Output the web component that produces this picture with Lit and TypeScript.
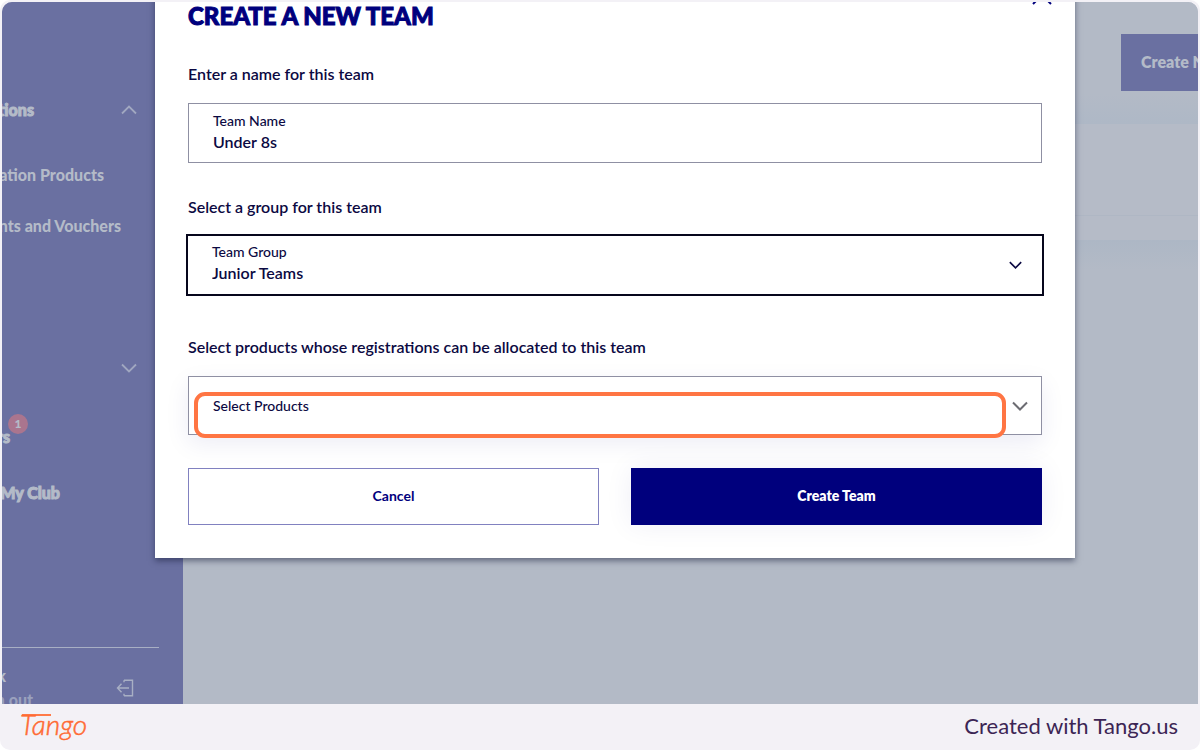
import { LitElement, html, css, svg } from "lit";
import { customElement, state } from "lit/decorators.js";

const chevron = (cls: string, up = false) => html`
  <svg class=${cls} viewBox="0 0 16 10" aria-hidden="true">
    ${up ? svg`<path d="M1 8.5 8 1.5l7 7" />` : svg`<path d="M1 1.5l7 7 7-7" />`}
  </svg>
`;

@customElement("side-nav")
class SideNav extends LitElement {
  static styles = css`
    :host {
      display: flex;
      flex-direction: column;
      flex: 0 0 181px;
      box-sizing: border-box;
      background: #6a70a1;
      color: #b4bbc8;
      overflow: hidden;
    }
    nav {
      display: flex;
      flex-direction: column;
      flex: 1;
      padding-top: 96px;
    }
    .item {
      display: flex;
      justify-content: flex-end;
      align-items: center;
      width: 141px;
      height: 24px;
      color: inherit;
      text-decoration: none;
      white-space: nowrap;
      font-weight: 900;
      font-size: 16px;
      line-height: 24px;
    }
    .group {
      gap: 87px;
      width: 135px;
    }
    .group,
    .members,
    .club {
      -webkit-text-stroke: 1px #b4bbc8;
    }
    .products {
      width: 102px;
      margin-top: 41px;
    }
    .vouchers {
      width: 119px;
      margin-top: 27px;
    }
    .closed {
      width: 135px;
      margin-top: 118px;
    }
    .members {
      width: 8px;
      margin-top: 45px;
      position: relative;
      overflow: visible;
    }
    .club {
      width: 58px;
      margin-top: 32px;
    }
    .badge {
      position: absolute;
      left: 6px;
      top: -11px;
      width: 20px;
      height: 20px;
      border-radius: 50%;
      background: #aa758e;
      font-size: 12px;
      line-height: 20px;
      text-align: center;
      -webkit-text-stroke: 0;
    }
    .chev {
      flex: none;
      width: 16px;
      height: 10px;
      fill: none;
      stroke: #a0a7c0;
      stroke-width: 1.8;
    }
    .account {
      display: flex;
      align-items: center;
      justify-content: space-between;
      box-sizing: border-box;
      width: 157px;
      height: 57px;
      overflow: hidden;
      border-top: 1px solid #a8afc4;
      padding-right: 25px;
      padding-top: 24px;
    }
    .who {
      display: flex;
      flex-direction: column;
      align-items: flex-end;
      width: 31px;
      font-size: 16px;
      line-height: 24px;
      font-weight: 900;
      white-space: nowrap;
    }
    .name {
      width: 4px;
      display: flex;
      justify-content: flex-end;
      align-self: flex-start;
    }
    .out {
      color: #9aa1bd;
      text-decoration: none;
    }
    .exit {
      width: 18px;
      height: 18px;
      fill: none;
      stroke: #a8afc4;
      stroke-width: 1.4;
    }
  `;

  render() {
    return html`
      <nav>
        <a class="item group" href="#registrations">Registrations ${chevron("chev", true)}</a>
        <a class="item products" href="#products">Registration Products</a>
        <a class="item vouchers" href="#vouchers">Discounts and Vouchers</a>
        <a class="item closed" href="#more" aria-label="More">${chevron("chev")}</a>
        <a class="item members" href="#members">Members<span class="badge">1</span></a>
        <a class="item club" href="#club">My Club</a>
      </nav>
      <div class="account">
        <div class="who">
          <span class="name">Mark</span>
          <a class="out" href="#signout">Sign out</a>
        </div>
        <svg class="exit" viewBox="0 0 18 18" aria-hidden="true">
          <path d="M8 1.2h8.5v15.6H8M8 1.2v2M8 16.8v-2M1.5 9H13M5.5 4.7 1.5 9l4 4.3" />
        </svg>
      </div>
    `;
  }
}

@customElement("team-dialog")
class TeamDialog extends LitElement {
  @state() private teamName = "Under 8s";

  static styles = css`
    :host {
      display: block;
      box-sizing: border-box;
      background: #fff;
      color: #0b0942;
      padding: 40px 33px 33px;
      box-shadow: 0 3px 6px rgba(20, 25, 55, 0.5);
    }
    .head {
      display: flex;
      justify-content: space-between;
      align-items: flex-start;
    }
    h1 {
      margin: 0;
      font-size: 24px;
      line-height: 32px;
      font-weight: 900;
      color: #00007d;
      text-transform: uppercase;
      -webkit-text-stroke: 1px #00007d;
    }
    .close {
      border: 0;
      background: none;
      padding: 0;
      width: 20px;
      height: 20px;
      margin: -15px -10px 0 0;
    }
    .close svg {
      display: block;
      fill: none;
      stroke: #00007d;
      stroke-width: 2;
    }
    .prompt {
      display: block;
      font-size: 16px;
      line-height: 20px;
      font-weight: 600;
      margin: 32px 0 19px;
    }
    .box {
      display: flex;
      flex-direction: column;
      justify-content: center;
      box-sizing: border-box;
      position: relative;
      height: 60px;
      border: 1px solid #8f90a3;
      padding: 0 24px 2px;
    }
    .box label {
      font-size: 14px;
      line-height: 20px;
      font-weight: 500;
    }
    input,
    select {
      appearance: none;
      display: block;
      width: 100%;
      box-sizing: border-box;
      border: 0;
      border-radius: 0;
      outline: 0;
      background: transparent;
      padding: 0;
      margin: 0;
      height: 22px;
      font: 600 16px/22px Lato, "Open Sans", sans-serif;
      color: inherit;
    }
    .focused {
      height: 62px;
      margin: -1px -2px 0;
      border: 2px solid #07071c;
      padding: 0 24px 4px;
    }
    .second {
      margin: 34px 0 18px;
    }
    .third {
      margin: 41px 0 19px;
    }
    .products {
      height: 59px;
      padding: 0 24px;
      box-shadow: 0 8px 24px rgba(0, 0, 125, 0.08);
    }
    .products select {
      font-size: 14px;
      font-weight: 500;
      height: 57px;
      line-height: 57px;
    }
    .arrow {
      position: absolute;
      right: 20px;
      top: 24px;
      width: 13px;
      height: 10px;
      fill: none;
      stroke: #0b0942;
      stroke-width: 2;
      pointer-events: none;
    }
    .grey {
      right: 13px;
      width: 16px;
      stroke: #6c6c72;
      stroke-width: 2;
    }
    .spot {
      position: absolute;
      inset: 15px 35px auto 5px;
      height: 46px;
      box-sizing: border-box;
      border: 4px solid #ff7543;
      border-radius: 11px;
      pointer-events: none;
    }
    .actions {
      display: grid;
      grid-template-columns: 1fr 1fr;
      gap: 32px;
      margin-top: 33px;
    }
    .btn {
      height: 57px;
      border: 1px solid #8181c0;
      background: #fff;
      color: #00007d;
      padding: 0 0 2px;
      font: 700 14px/20px Lato, "Open Sans", sans-serif;
    }
    .primary {
      border-color: #00007d;
      background: #00007d;
      color: #fff;
      font-weight: 800;
      box-shadow: 0 0 28px rgba(0, 0, 125, 0.07);
    }
  `;

  render() {
    return html`
      <div class="head">
        <h1>Create a new team</h1>
        <button class="close" aria-label="Close">
          <svg width="20" height="20" viewBox="0 0 20 20"><path d="M1 1l18 18M19 1 1 19" /></svg>
        </button>
      </div>
      <div class="prompt">Enter a name for this team</div>
      <div class="box">
        <label for="name">Team Name</label>
        <input
          id="name"
          .value=${this.teamName}
          @input=${(e: Event) => (this.teamName = (e.target as HTMLInputElement).value)}
        />
      </div>
      <div class="prompt second">Select a group for this team</div>
      <div class="box focused">
        <label for="group">Team Group</label>
        <select id="group">
          <option>Junior Teams</option>
        </select>
        ${chevron("arrow")}
      </div>
      <label class="prompt third" for="products">
        Select products whose registrations can be allocated to this team
      </label>
      <div class="box products">
        <select id="products">
          <option>Select Products</option>
        </select>
        ${chevron("arrow grey")}
        <div class="spot"></div>
      </div>
      <div class="actions">
        <button class="btn">Cancel</button>
        <button class="btn primary">Create Team</button>
      </div>
    `;
  }
}

@customElement("app-root")
class AppRoot extends LitElement {
  static styles = css`
    :host {
      display: flex;
      flex-direction: column;
      height: 100vh;
      box-sizing: border-box;
      padding: 2px 2px 0;
      background: #f3f1f6;
      border-radius: 10px;
      overflow: hidden;
      font-family: Lato, "Open Sans", sans-serif;
    }
    .screen {
      position: relative;
      flex: 1;
      min-height: 0;
      display: flex;
      overflow: hidden;
      border-radius: 10px 10px 0 0;
      background: #b3bac6;
    }
    main {
      flex: 1;
      min-width: 0;
      display: flex;
      flex-direction: column;
    }
    .bar {
      display: flex;
      justify-content: flex-end;
      box-sizing: border-box;
      height: 122px;
      padding-top: 32px;
      background: linear-gradient(#b3bac6 75%, #aeb8c6);
    }
    .new {
      flex: none;
      height: 57px;
      width: 180px;
      margin-right: -103px;
      border: 0;
      background: #6a70a1;
      color: #b4bbc8;
      padding: 0 0 2px 20px;
      text-align: left;
      font: 800 16px/20px Lato, "Open Sans", sans-serif;
    }
    .row {
      height: 91px;
      background: #b5bbc7;
      border-bottom: 1px solid #afb7c4;
    }
    .foot {
      height: 24px;
      background: #b5bbc7;
    }
    .shade {
      height: 30px;
      background: linear-gradient(#adb7c5, #b3bac6);
    }
    team-dialog {
      position: absolute;
      top: -42px;
      left: 153px;
      right: 123px;
    }
    footer {
      flex: none;
      display: flex;
      justify-content: space-between;
      align-items: center;
      box-sizing: border-box;
      height: 46px;
      padding: 0 20px 2px 16px;
      font-size: 22px;
      line-height: 24px;
      color: #3c2554;
    }
    .logo {
      display: block;
      width: 76px;
      height: 40px;
    }
    .logo text {
      font: italic 300 28px Lato, sans-serif;
      fill: #ff6a33;
      stroke: #ff6a33;
      stroke-width: 0.5;
    }
    .logo line {
      stroke: #ff7a48;
      stroke-width: 2;
    }
  `;

  render() {
    return html`
      <div class="screen">
        <side-nav></side-nav>
        <main>
          <div class="bar"><button class="new">Create New Team</button></div>
          <div class="row"></div>
          <div class="foot"></div>
          <div class="shade"></div>
        </main>
        <team-dialog role="dialog" aria-label="Create a new team"></team-dialog>
      </div>
      <footer>
        <svg class="logo" viewBox="0 0 76 40" role="img" aria-label="Tango">
          <line x1="4" y1="9" x2="33" y2="9" />
          <text x="2" y="29">Tango</text>
        </svg>
        <span>Created with Tango.us</span>
      </footer>
    `;
  }
}
